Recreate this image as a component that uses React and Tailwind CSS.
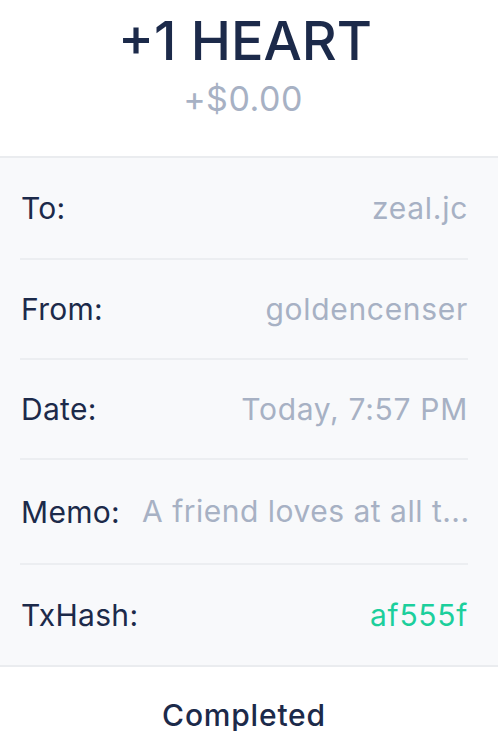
import React from "react";

const rows = [
  { label: "To:", value: "zeal.jc", h: "h-[102px]" },
  { label: "From:", value: "goldencenser", h: "h-[100px]" },
  { label: "Date:", value: "Today, 7:57 PM", h: "h-[100px]" },
  { label: "Memo:", value: "A friend loves at all t...", memo: true, h: "h-[105px]" },
  { label: "TxHash:", value: "af555f", green: true, h: "h-[100px]" },
];

export default function App() {
  return (
    <div
      className="w-[498px] h-[731px] overflow-hidden bg-white"
      style={{ fontFamily: "Inter, 'Noto Sans', sans-serif" }}
    >
      <div className="h-[158px] border-b-2 border-[#eaecef] flex flex-col items-center">
        <div className="pt-[14px] pr-[8px] text-[54px] leading-none font-medium text-[#1c2a4a]">
          +1 HEART
        </div>
        <div className="mt-[14px] pr-[12px] text-[34px] leading-none tracking-[0.5px] text-[#a7b1c4]">
          +$0.00
        </div>
      </div>
      <div className="bg-[#f8f9fb] pl-[20px] pr-[30px] border-b-2 border-[#eaecef]">
        {rows.map((r, i) => (
          <div
            key={r.label}
            className={`flex items-center justify-between gap-[22px] ${r.h} ${
              i < rows.length - 1 ? "border-b-2 border-[#eceef1]" : ""
            }`}
          >
            <div className="text-[30px] leading-none tracking-[0.3px] text-[#1c2a4a] pl-[1px] shrink-0">
              {r.label}
            </div>
            <div
              className={`text-[30px] leading-normal whitespace-nowrap min-w-0 ${
                r.memo ? "tracking-[0.5px]" : "tracking-[0.7px]"
              } ${r.green ? "text-[#1ccf9c]" : "text-[#a7b1c4]"}`}
            >
              {r.value}
            </div>
          </div>
        ))}
      </div>
      <div className="pt-[33px] pr-[10px] text-center text-[30px] leading-none tracking-[0.8px] font-medium text-[#1c2a4a]">
        Completed
      </div>
    </div>
  );
}
